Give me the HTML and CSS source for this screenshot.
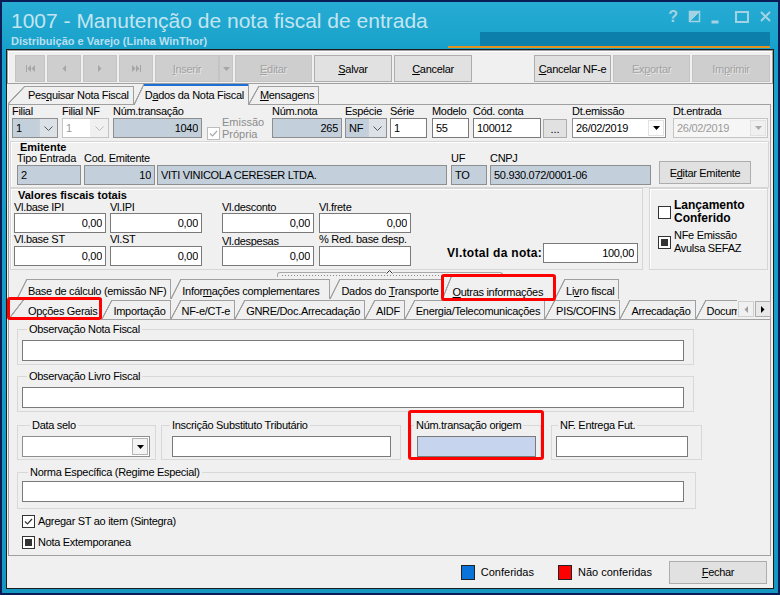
FILE: index.html
```html
<!DOCTYPE html>
<html lang="pt-BR">

<head>
  <meta charset="UTF-8">
  <title>1007 - Manutenção de nota fiscal de entrada</title>
  <link rel="stylesheet" href="styles.css">
</head>

<body>
  <div class="window">
    <div class="titlebar">
      <div class="titles">
        <h1>1007 - Manutenção de nota fiscal de entrada</h1>
        <h2>Distribuição e Varejo (Linha WinThor)</h2>
      </div>
      <span class="help">?</span>
      <svg class="caption" width="90" height="16" viewBox="18 0 90 16">
        <rect x="23.5" y="1.5" width="10" height="10" fill="none" stroke-width="1.5" />
        <path d="M23.5 11.5V1.5h10z" />
        <rect x="46" y="11" width="6" height="2" />
        <rect x="70" y="2" width="12" height="10" fill="none" stroke-width="2" />
        <path d="M95 2l9 9M104 2l-9 9" fill="none" stroke-width="2" />
      </svg>
    </div>

    <div class="client">
      <!-- barra de botões -->
      <div class="toolbar">
        <button class="btn off b-first"><svg width="9" height="7" viewBox="0 0 9 7"><path d="M0 0h1v7H0zM5 0v7L1.5 3.5zM9 0v7L5.5 3.5z" /></svg></button>
        <button class="btn off b-nav"><svg width="4" height="7" viewBox="0 0 4 7"><path d="M4 0v7L.5 3.5z" /></svg></button>
        <button class="btn off b-nav"><svg width="4" height="7" viewBox="0 0 4 7"><path d="M0 0v7l3.5-3.5z" /></svg></button>
        <button class="btn off b-nav"><svg width="9" height="7" viewBox="0 0 9 7"><path d="M0 0v7l3.5-3.5zM4 0v7l3.5-3.5zM8 0h1v7H8z" /></svg></button>
        <button class="btn off b-ins"><u>I</u>nserir</button>
        <button class="btn off b-drop"><svg width="7" height="4" viewBox="0 0 7 4"><path d="M0 0h7L3.5 4z" /></svg></button>
        <button class="btn off b-edit"><u>E</u>ditar</button>
        <button class="btn b-save"><u>S</u>alvar</button>
        <button class="btn b-cancel"><u>C</u>ancelar</button>
        <button class="btn b-nfe"><u>C</u>ancelar NF-e</button>
        <button class="btn off b-exp">Ex<u>p</u>ortar</button>
        <button class="btn off b-imp">Im<u>p</u>rimir</button>
      </div>

      <div class="tabs tabs-main">
        <div class="tab first">Pes<u>q</u>uisar Nota Fiscal</div>
        <div class="tab on">D<u>a</u>dos da Nota Fiscal</div>
        <div class="tab"><u>M</u>ensagens</div>
      </div>

      <div class="sheet">
        <!-- cabeçalho da nota -->
        <div class="row1">
          <div class="fld c-filial"><span class="lbl">Filial</span>
            <div class="combo ro"><span class="val">1</span><span class="arr"><svg width="9" height="5" viewBox="0 0 9 5"><path d="M.5.5l4 4 4-4" fill="none" stroke="#555" /></svg></span></div>
          </div>
          <div class="fld c-filialnf"><span class="lbl">Filial NF</span>
            <div class="combo dis"><span class="val">1</span><span class="arr"><svg width="9" height="5" viewBox="0 0 9 5"><path d="M.5.5l4 4 4-4" fill="none" stroke="#bbb" /></svg></span></div>
          </div>
          <div class="fld c-numtrans"><span class="lbl">Núm.transação</span><input class="in ro num" value="1040" readonly></div>
          <div class="emissao">
            <span class="cb dis"><svg width="11" height="11" viewBox="0 0 11 11"><path d="M2 5.5l2.5 2.5L9 3" fill="none" stroke="#a8a8a8" stroke-width="1.2" /></svg></span>
            <span class="emissao-txt">Emissão<br>Própria</span>
          </div>
          <div class="fld c-numnota"><span class="lbl">Núm.nota</span><input class="in ro num" value="265" readonly></div>
          <div class="fld c-especie"><span class="lbl">Espécie</span>
            <div class="combo ro"><span class="val">NF</span><span class="arr"><svg width="9" height="5" viewBox="0 0 9 5"><path d="M.5.5l4 4 4-4" fill="none" stroke="#555" /></svg></span></div>
          </div>
          <div class="fld c-serie"><span class="lbl">Série</span><input class="in" value="1"></div>
          <div class="fld c-modelo"><span class="lbl">Modelo</span><input class="in" value="55"></div>
          <div class="fld c-conta"><span class="lbl">Cód. conta</span><input class="in" value="100012"></div>
          <button class="btn dots">...</button>
          <div class="fld c-dtemis"><span class="lbl">Dt.emissão</span>
            <div class="combo date"><span class="val">26/02/2019</span><span class="arr"><svg width="7" height="4" viewBox="0 0 7 4"><path d="M0 0h7L3.5 4z" /></svg></span></div>
          </div>
          <div class="fld c-dtent"><span class="lbl">Dt.entrada</span>
            <div class="combo date dis"><span class="val">26/02/2019</span><span class="arr"><svg width="7" height="4" viewBox="0 0 7 4"><path d="M0 0h7L3.5 4z" fill="#aaa" /></svg></span></div>
          </div>
        </div>

        <div class="group emitente">
          <div class="gtitle">Emitente</div>
          <div class="erow">
            <div class="fld c-tipo"><span class="lbl">Tipo Entrada</span><input class="in ro" value="2" readonly></div>
            <div class="fld c-codem"><span class="lbl">Cod. Emitente</span><input class="in ro num" value="10" readonly></div>
            <div class="fld c-nome"><span class="lbl"></span><input class="in ro" value="VITI VINICOLA CERESER LTDA." readonly></div>
            <div class="fld c-uf"><span class="lbl">UF</span><input class="in ro" value="TO" readonly></div>
            <div class="fld c-cnpj"><span class="lbl">CNPJ</span><input class="in ro" value="50.930.072/0001-06" readonly></div>
            <button class="btn b-editem">E<u>d</u>itar Emitente</button>
          </div>
        </div>

        <div class="vrow">
          <div class="group valores">
            <div class="gtitle">Valores fiscais totais</div>
            <div class="vbody">
              <div class="vgrid">
                <span class="lbl">Vl.base IPI</span>
                <span class="lbl">Vl.IPI</span>
                <span class="lbl">Vl.desconto</span>
                <span class="lbl">Vl.frete</span>
                <input class="in num" value="0,00">
                <input class="in num" value="0,00">
                <input class="in num" value="0,00">
                <input class="in num" value="0,00">
                <span class="lbl">Vl.base ST</span>
                <span class="lbl">Vl.ST</span>
                <span class="lbl low">Vl.despesas</span>
                <span class="lbl">% Red. base desp.</span>
                <input class="in num" value="0,00">
                <input class="in num" value="0,00">
                <input class="in num" value="0,00">
                <input class="in num" value="">
              </div>
              <div class="vtotal"><span class="vtotal-lbl">Vl.total da nota:</span><input class="in num" value="100,00"></div>
            </div>
          </div>
          <div class="group conf">
            <label class="chk"><span class="cb"></span><span class="conf-bold">Lançamento<br>Conferido</span></label>
            <label class="chk"><span class="cb fill"></span><span>NFe Emissão<br>Avulsa SEFAZ</span></label>
          </div>
        </div>

        <div class="splitter">
          <div class="grip"><svg width="7" height="4" viewBox="0 0 7 4"><path d="M.5 3.5l3-3 3 3" fill="none" stroke="#333" /></svg></div>
        </div>

        <div class="tabs subtabs-a">
          <div class="tab">Base de cálculo (emissão NF)</div>
          <div class="tab t-info">Infor<u>m</u>ações complementares</div>
          <div class="tab t-dados">Dados do <u>T</u>ransporte</div>
          <div class="tab t-outras on mark mark-outras"><u>O</u>utras informações</div>
          <div class="tab">Li<u>v</u>ro fiscal</div>
        </div>

        <div class="tabs subtabs-b">
          <div class="tab first on mark mark-opcoes">Opções Gerais</div>
          <div class="tab">Importação</div>
          <div class="tab">NF-e/CT-e</div>
          <div class="tab">GNRE/Doc.Arrecadação</div>
          <div class="tab">AIDF</div>
          <div class="tab">Energia/Telecomunicações</div>
          <div class="tab">PIS/COFINS</div>
          <div class="tab">Arrecadação</div>
          <div class="tab cut">Docum</div>
          <div class="scroll">
            <span class="sb dis"><svg width="4" height="7" viewBox="0 0 4 7"><path d="M4 0v7L.5 3.5z" fill="#a0a0a0" /></svg></span>
            <span class="sb"><svg width="4" height="7" viewBox="0 0 4 7"><path d="M0 0v7l3.5-3.5z" /></svg></span>
          </div>
        </div>

        <div class="subpage">
          <div class="grp g-obsnf"><span class="glbl">Observação Nota Fiscal</span><input class="in"></div>
          <div class="grp g-obslf"><span class="glbl">Observação Livro Fiscal</span><input class="in"></div>
          <div class="grow">
            <div class="grp g-selo"><span class="glbl">Data selo</span>
              <div class="combo date"><span class="val"></span><span class="arr boxed"><svg width="7" height="4" viewBox="0 0 7 4"><path d="M0 0h7L3.5 4z" /></svg></span></div>
            </div>
            <div class="grp g-insc"><span class="glbl">Inscrição Substituto Tributário</span><input class="in"></div>
            <div class="grp g-origem mark"><span class="glbl">Núm.transação origem</span><input class="in origem" readonly></div>
            <div class="grp g-entrega"><span class="glbl">NF. Entrega Fut.</span><input class="in"></div>
          </div>
          <div class="grp g-norma"><span class="glbl">Norma Específica (Regime Especial)</span><input class="in"></div>
          <label class="chk opt"><span class="cb"><svg width="11" height="11" viewBox="0 0 11 11"><path d="M2 5.5l2.5 2.5L9 3" fill="none" stroke="#333" stroke-width="1.2" /></svg></span>Agregar ST ao item (Sintegra)</label>
          <label class="chk opt opt2"><span class="cb fill"></span>Nota Extemporanea</label>
        </div>
      </div>

      <div class="statusbar">
        <span class="legend blue"></span><span class="legend-txt">Conferidas</span>
        <span class="legend red"></span><span class="legend-txt">Não conferidas</span>
        <button class="btn b-fechar"><u>F</u>echar</button>
      </div>
    </div>
  </div>
</body>

</html>
```

FILE: styles.css
```css
* {
  box-sizing: border-box;
  margin: 0;
  padding: 0
}

body {
  width: 780px;
  height: 595px;
  overflow: hidden;
  background: #0b1d56;
  font: 11px "Liberation Sans", Arial, sans-serif;
  letter-spacing: -0.3px;
  color: #000;
}

input,
button {
  font: inherit;
  letter-spacing: inherit;
  color: inherit;
}

u {
  text-decoration-thickness: 1px;
  text-underline-offset: 1px;
}

.window {
  width: 780px;
  height: 595px;
  border: 2px solid #0b1d56;
  padding: 0 4px 4px;
  display: flex;
  flex-direction: column;
  background: linear-gradient(180deg, #27acd4 0, #17a1ca 47px, #1597c1 100%);
}

/* title */
.titlebar {
  position: relative;
  flex: none;
  height: 47px;
  display: flex;
  padding-left: 5px;
  overflow: hidden;
}

.titlebar::before {
  content: '';
  position: absolute;
  left: 474px;
  right: 4px;
  top: 30px;
  height: 14px;
  background: #0c80aa;
}

.titlebar::after {
  content: '';
  position: absolute;
  left: 442px;
  right: 4px;
  top: 44px;
  height: 2px;
  background: #e3921f;
}

.titles h1 {
  margin-top: 7px;
  font-size: 21px;
  line-height: 24px;
  font-weight: normal;
  letter-spacing: 0;
  color: #c3e5f1;
}

.titles h2 {
  margin-top: 2px;
  font-size: 11px;
  line-height: 13px;
  letter-spacing: 0;
  color: #b7dff0;
}

.help {
  margin: 6px 0 0 auto;
  font-size: 16px;
  line-height: 18px;
  font-weight: bold;
  letter-spacing: 0;
  color: #a3d2e3;
}

.caption {
  margin: 8px 0 0 6px;
  fill: #a3d2e3;
  stroke: #a3d2e3;
}

/* client area */
.client {
  flex: 1;
  display: flex;
  flex-direction: column;
  background: #f0f0f0;
  border: 1px solid #1c1c1c;
}

.toolbar {
  flex: none;
  height: 34px;
  display: flex;
  gap: 2px;
  padding: 4px 2px 0 7px;
  border: 1px solid #a0a0a0;
  box-shadow: inset 1px 1px 0 #fff;
}

.btn {
  height: 27px;
  display: flex;
  align-items: center;
  justify-content: center;
  border: 1px solid #adadad;
  background: #e1e1e1;
  white-space: nowrap;
}

.btn.off {
  background: #cecece;
  border-color: #c4c4c4;
  color: #a2a2a2;
  text-shadow: 1px 1px 0 #e6e6e6;
  fill: #a6a6a6;
}

.b-first { width: 30px }
.b-nav { width: 34px }
.b-ins { width: 64px }
.b-drop { width: 14px; margin-left: -2px; border-left-color: #b8b8b8 }
.b-edit { width: 77px }
.b-save { width: 78px }
.b-cancel { width: 78px }
.b-nfe { width: 77px; margin-left: auto }
.b-exp { width: 77px }
.b-imp { width: 78px }

/* tabs */
.tabs {
  flex: none;
  display: flex;
  align-items: flex-end;
}

.tab {
  --s: 10px;
  position: relative;
  height: 18px;
  line-height: 17px;
  padding: 1px 4px 0 calc(var(--s) + 1px);
  white-space: nowrap;
  border-right: 1px solid #a0a0a0;
  background:
    linear-gradient(to bottom right, transparent calc(50% - 0.9px), #a0a0a0 calc(50% - 0.4px), #a0a0a0 calc(50% + 0.4px), transparent calc(50% + 0.9px)) 0 0 / var(--s) 100% no-repeat,
    linear-gradient(#a0a0a0, #a0a0a0) var(--s) 0 / 100% 1px no-repeat;
}

.tab.first {
  --s: 17px;
  padding-left: 20px;
}

.tab.on {
  z-index: 1;
  height: 21px;
  padding-top: 3px;
  margin-bottom: -1px;
  background:
    linear-gradient(#1c6fd4, #1c6fd4) var(--s) 0 / 100% 2px no-repeat,
    linear-gradient(to bottom right, transparent calc(50% - 0.9px), #a0a0a0 calc(50% - 0.4px), #a0a0a0 calc(50% + 0.4px), transparent calc(50% + 0.9px)) 0 0 / var(--s) 100% no-repeat,
    #f0f0f0;
}

.tabs-main {
  height: 20px;
  padding-left: 1px;
}

.sheet {
  flex: 1;
  display: flex;
  flex-direction: column;
  margin: 0 2px 0 1px;
  border: 1px solid #a0a0a0;
}

/* fields */
.fld {
  display: flex;
  flex-direction: column;
  flex: none;
}

.lbl {
  height: 13px;
  line-height: 13px;
  white-space: nowrap;
}

.in {
  display: block;
  width: 100%;
  height: 20px;
  padding: 0 3px;
  border: 1px solid #7a7a7a;
  background: #fff;
  outline: none;
}

.in.ro {
  background: #c3cfdb;
  border-color: #8e8e8e;
}

.in.num {
  text-align: right;
}

.in.origem {
  background: #c6d4ee;
}

.combo {
  display: flex;
  height: 20px;
  border: 1px solid #8e8e8e;
  background: #fff;
}

.combo .val {
  flex: 1;
  padding-left: 3px;
  line-height: 18px;
  white-space: nowrap;
}

.combo .arr {
  width: 18px;
  display: flex;
  align-items: center;
  justify-content: center;
}

.combo.ro {
  background: #c3cfdb;
}

.combo.ro .arr {
  background: #dbe1e7;
  border-left: 1px solid #c9d0d7;
}

.combo.dis {
  border-color: #c4c4c4;
  color: #9a9a9a;
}

.combo.dis .arr {
  background: #f0f0f0;
}

.combo.date .arr {
  width: 16px;
  margin: 1px 1px 1px 0;
  border: 1px solid #e2e2e2;
}

.combo.date.dis {
  background: #f6f6f6;
}

.combo .arr.boxed {
  border-color: #b4b4b4;
  background: #f4f4f4;
}

.row1 {
  flex: none;
  display: flex;
  height: 33px;
  padding-left: 3px;
}

.c-filial { width: 46px }
.c-filialnf { width: 47px; margin-left: 4px }
.c-numtrans { width: 89px; margin-left: 4px }
.c-numnota { width: 70px }
.c-especie { width: 42px; margin-left: 3px }
.c-serie { width: 37px; margin-left: 3px }
.c-modelo { width: 37px; margin-left: 5px }
.c-conta { width: 68px; margin-left: 4px }
.c-dtemis { width: 94px; margin-left: 5px }
.c-dtent { width: 95px; margin-left: 7px }

.emissao {
  width: 66px;
  margin: 11px 0 0 4px;
  display: flex;
  color: #8c8c8c;
}

.emissao .cb {
  margin: 11px 2px 0 1px;
}

.emissao-txt {
  line-height: 12px;
  letter-spacing: 0;
}

.dots {
  align-self: flex-end;
  width: 24px;
  height: 19px;
  margin-left: 2px;
  letter-spacing: 0;
}

/* groups */
.group {
  border: 1px solid #d6d6d6;
  box-shadow: inset 1px 1px 0 #fff;
}

.gtitle {
  font-weight: bold;
  letter-spacing: 0;
}

.emitente {
  flex: none;
  height: 47px;
  margin: 3px 1px 0;
  padding-left: 6px;
}

.emitente .gtitle {
  line-height: 10px;
  margin-left: 3px;
}

.erow {
  display: flex;
}

.c-tipo { width: 64px }
.c-codem { width: 71px; margin-left: 3px }
.c-nome { width: 290px; margin-left: 2px }
.c-uf { width: 36px; margin-left: 4px }
.c-cnpj { width: 161px; margin-left: 3px }

.b-editem {
  align-self: flex-end;
  width: 92px;
  height: 23px;
  margin: 0 0 1px 8px;
}

.vrow {
  flex: none;
  display: flex;
  height: 82px;
}

.valores {
  width: 633px;
  margin-left: 1px;
  padding-left: 3px;
  display: flex;
  flex-direction: column;
}

.valores .gtitle {
  line-height: 12px;
  margin-left: 4px;
}

.vbody {
  flex: 1;
  display: flex;
}

.vgrid {
  display: grid;
  grid-template-columns: 96px 112px 97px 93px;
  grid-template-rows: 12px 20px 13px 20px;
}

.vgrid .in {
  width: 92px;
}

.vgrid .lbl {
  height: auto;
  line-height: 12px;
}

.vgrid .lbl.low {
  padding-top: 2px;
}

.vtotal {
  align-self: flex-end;
  display: flex;
  align-items: center;
  margin: 0 0 6px 35px;
}

.vtotal-lbl {
  width: 96px;
  font-size: 12px;
  font-weight: bold;
  letter-spacing: 0.3px;
}

.vtotal .in {
  width: 95px;
}

.conf {
  width: 119px;
  margin-left: 6px;
  padding: 10px 0 0 8px;
  display: flex;
  flex-direction: column;
  gap: 4px;
}

.chk {
  display: flex;
  align-items: center;
  line-height: 13px;
  white-space: nowrap;
}

.chk .cb {
  margin-right: 3px;
}

.conf-bold {
  font-size: 12px;
  font-weight: bold;
  letter-spacing: 0;
}

.cb {
  flex: none;
  position: relative;
  width: 13px;
  height: 13px;
  border: 1px solid #333;
  background: #fff;
  display: flex;
  align-items: center;
  justify-content: center;
}

.cb.dis {
  border-color: #bcbcbc;
}

.cb.fill::after {
  content: '';
  position: absolute;
  inset: 2px;
  background: #333;
}

.splitter {
  flex: none;
  height: 7px;
}

.grip {
  position: relative;
  width: 226px;
  height: 5px;
  margin: 2px 0 0 268px;
  border: 1px solid #a8a8a8;
  border-bottom: none;
  border-radius: 3px 3px 0 0;
  background: repeating-linear-gradient(90deg, #8a8a8a 0 1px, transparent 1px 3px) 4px 2px / 216px 1px no-repeat;
}

.grip svg {
  position: absolute;
  left: 108px;
  top: -3px;
  background: #f0f0f0;
}

.subtabs-a {
  height: 22px;
  padding-left: 8px;
}

.subtabs-a .tab {
  height: 20px;
  line-height: 16px;
  padding-top: 4px;
}

.subtabs-a .tab.on {
  height: 25px;
  padding-top: 9px;
}

.subtabs-a .t-info { padding-right: 10px }
.subtabs-a .t-dados { padding-right: 2px }
.subtabs-a .t-outras { padding-right: 11px }

.subtabs-b {
  height: 20px;
  margin-left: -1px;
}

.subtabs-b .tab {
  height: 19px;
  line-height: 16px;
  padding-top: 3px;
}

.subtabs-b .tab.on {
  height: 22px;
  padding-top: 5px;
}

.tab.cut {
  width: 41px;
  overflow: hidden;
  border-right: none;
}

.scroll {
  display: flex;
  gap: 1px;
  margin: 0 -1px 2px auto;
  align-self: flex-end;
}

.sb {
  width: 16px;
  height: 16px;
  display: flex;
  align-items: center;
  justify-content: center;
  border: 1px solid #adadad;
  background: #e8e8e8;
}

.sb.dis {
  border-color: #cfcfcf;
  background: #f0f0f0;
}

.mark::after {
  content: '';
  position: absolute;
  border: 3px solid #f00;
  border-radius: 3px;
}

.mark-outras::after {
  inset: -1px -2px -1px -1px;
}

.mark-opcoes::after {
  inset: -1px -1px 0 -1px;
}

.g-origem.mark::after {
  inset: -16px -4px -1px -4px;
}

/* page content */
.subpage {
  flex: 1;
  border-top: 1px solid #a0a0a0;
}

.grp {
  position: relative;
  border: 1px solid #d8d8d8;
  padding: 0 0 3px 4px;
}

.grp .in {
  height: 21px;
  margin-top: 5px;
}

.grp .combo {
  height: 21px;
  margin-top: 5px;
}

.glbl {
  display: block;
  width: fit-content;
  margin: -7px 0 0 5px;
  padding: 0 2px;
  line-height: 12px;
  background: #f0f0f0;
  white-space: nowrap;
}

.g-obsnf {
  width: 677px;
  margin: 9px 0 0 8px;
}

.g-obslf {
  width: 677px;
  margin: 11px 0 0 8px;
}

.g-obsnf .in,
.g-obslf .in,
.g-norma .in {
  width: 662px;
}

.grow {
  display: flex;
  margin-top: 13px;
}

.grow .grp {
  padding-bottom: 2px;
}

.g-selo {
  width: 139px;
  margin-left: 8px;
}

.g-selo .glbl {
  margin-left: 8px;
}

.g-insc {
  width: 240px;
  margin-left: 5px;
  padding-left: 10px;
}

.g-insc .glbl {
  margin-left: -2px;
}

.g-origem {
  width: 130px;
  margin-left: 10px;
  padding-left: 5px;
}

.g-origem .glbl {
  margin-left: -3px;
}

.g-entrega {
  width: 151px;
  margin-left: 10px;
}

.g-entrega .glbl {
  margin-left: 2px;
}

.g-selo .combo { width: 128px }
.g-insc .in { width: 219px }
.g-origem .in { width: 119px }
.g-entrega .in { width: 132px }

.g-norma {
  width: 679px;
  margin: 12px 0 0 8px;
  padding-bottom: 6px;
}

.g-norma .glbl {
  margin-left: 6px;
}

.g-norma .in {
  margin-top: 3px;
}

.opt {
  margin: 6px 0 0 13px;
}

.opt2 {
  margin-top: 8px;
}

/* bottom bar */
.statusbar {
  flex: none;
  height: 32px;
  display: flex;
  align-items: center;
  justify-content: flex-end;
  padding-right: 6px;
}

.legend {
  width: 14px;
  height: 15px;
  border: 1px solid #222;
}

.legend.blue {
  background: #0a74da;
}

.legend.red {
  background: #f00;
  margin-left: 24px;
}

.legend-txt {
  margin-left: 6px;
  letter-spacing: 0;
}

.b-fechar {
  width: 98px;
  height: 23px;
  margin-left: 17px;
}
```
